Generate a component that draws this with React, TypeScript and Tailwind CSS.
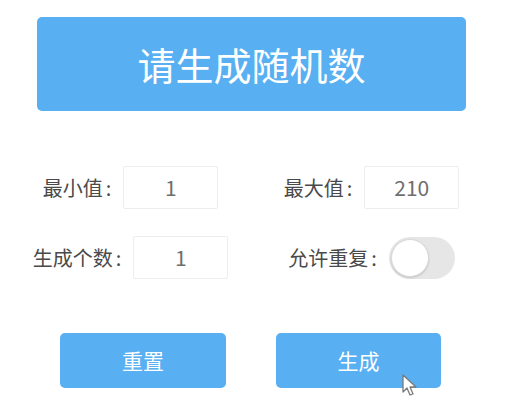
import React, { useState } from "react";

const font = { fontFamily: '"Noto Sans CJK SC", "Noto Sans", sans-serif' };

function Label({ text }: { text: string }) {
  return (
    <span className="flex items-center text-[20px] leading-none text-[#4a4a4a]">
      {text}
      <span className="ml-[3px]">:</span>
    </span>
  );
}

function Field({ label, value }: { label: string; value: string }) {
  return (
    <div className="flex items-center gap-[12px]">
      <Label text={label} />
      <div className="flex h-[43px] w-[95px] items-center justify-center rounded-[2px] border border-[#ededed] text-[21px] leading-none text-[#6e6e6e]">
        {value}
      </div>
    </div>
  );
}

function Toggle({ on, onChange }: { on: boolean; onChange: (v: boolean) => void }) {
  return (
    <button
      type="button"
      onClick={() => onChange(!on)}
      className={`flex h-[42px] w-[66px] items-center rounded-full p-[2px] ${on ? "justify-end bg-[#58aff1]" : "justify-start bg-[#e6e6e6]"}`}
    >
      <span className="block h-[38px] w-[38px] rounded-full border border-[#d9d9d9] bg-white shadow-[0_1px_2px_rgba(0,0,0,0.15)]" />
    </button>
  );
}

function Cursor() {
  return (
    <svg className="absolute left-[126px] top-[41px]" width="16" height="24" viewBox="0 0 16 24">
      <path
        d="M1 1 L1 18 L5 14 L8 21 L11 20 L8 13 L14 13 Z"
        fill="#fff"
        stroke="#7a7a7a"
        strokeWidth="1.3"
        strokeLinejoin="round"
      />
    </svg>
  );
}

export default function App() {
  const [repeat, setRepeat] = useState(false);

  return (
    <div className="h-[400px] w-[510px] bg-white pt-[17px]" style={font}>
      <div className="ml-[37px] flex h-[94px] w-[429px] items-center justify-center rounded-[5px] bg-[#58aff1]">
        <span className="text-[38px] leading-none text-white">请生成随机数</span>
      </div>

      <div className="mt-[55px] ml-[10px] grid w-[482px] grid-cols-2 gap-y-[27px]">
        <div className="flex justify-center">
          <Field label="最小值" value="1" />
        </div>
        <div className="flex justify-center">
          <Field label="最大值" value="210" />
        </div>
        <div className="flex justify-center">
          <Field label="生成个数" value="1" />
        </div>
        <div className="flex justify-center">
          <div className="flex items-center gap-[12px]">
            <Label text="允许重复" />
            <Toggle on={repeat} onChange={setRepeat} />
          </div>
        </div>
      </div>

      <div className="mt-[54px] ml-[60px] flex gap-[50px]">
        <button className="flex h-[55px] w-[166px] items-center justify-center rounded-[5px] bg-[#58aff1] text-[21px] leading-none text-white">
          重置
        </button>
        <button className="relative flex h-[55px] w-[165px] items-center justify-center rounded-[5px] bg-[#58aff1] text-[21px] leading-none text-white">
          生成
          <Cursor />
        </button>
      </div>
    </div>
  );
}
